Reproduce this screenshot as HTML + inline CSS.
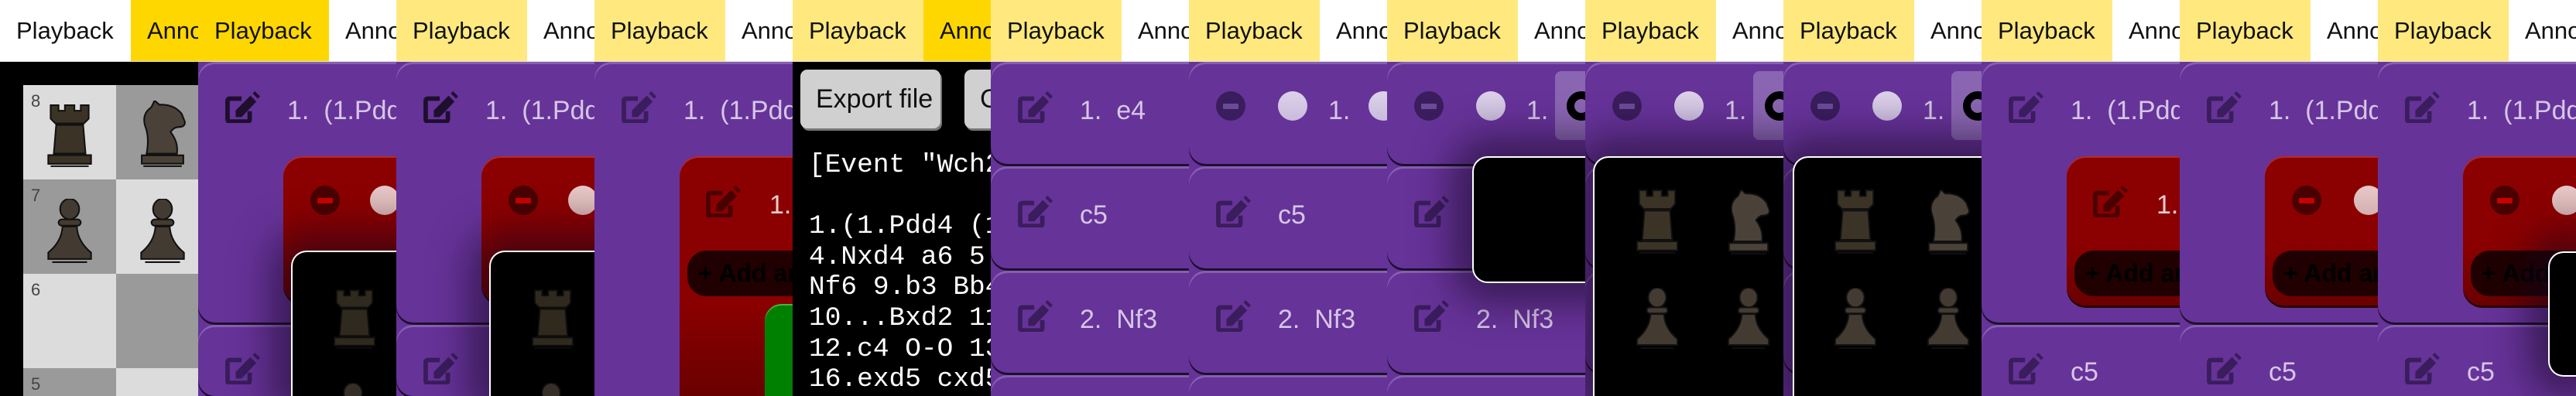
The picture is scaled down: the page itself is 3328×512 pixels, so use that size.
<!DOCTYPE html>
<html style="width:3328px;height:512px;overflow:hidden"><head><meta charset="utf-8"><style>
*{margin:0;padding:0;box-sizing:border-box}
body{width:3328px;height:512px;overflow:hidden;background:#000;font-family:"Liberation Sans",sans-serif;position:relative}
.p{position:absolute;top:0;width:256px;height:512px;overflow:hidden;background:#000}
.hd{position:absolute;left:0;top:0;width:256px;height:80px;background:#fff;border-bottom:1px solid #ddd;white-space:nowrap;z-index:5}
.t{position:absolute;top:0;height:79px;line-height:80px;font-size:31px;color:#111;padding-left:21px}
.t1{left:0;width:169px}.t2{left:169px;width:120px}
.w{background:#fff}.g{background:#ffd700}.l{background:#ffe97f}
.bgp{position:absolute;left:0;top:80px;width:256px;height:432px;background:#663399}
.card{position:absolute;left:0;width:300px;background:#663399;border-radius:22px;box-shadow:inset 0 3px 0 rgba(255,255,255,.22),0 3px 0 #1d0f2e}
.red{position:absolute;left:110px;width:260px;border-radius:25px;background:linear-gradient(#8b0000 0,#8b0000 60%,#6a0000 100%);box-shadow:inset 0 2px 0 rgba(255,120,120,.35),0 3px 0 #2a0000}
.green{position:absolute;left:220px;top:393px;width:200px;height:119px;background:#008000;border-radius:22px 22px 0 0;box-shadow:inset 0 2px 0 rgba(180,255,180,.4)}
.add{position:absolute;left:120px;top:324px;width:200px;height:59px;background:#200000;border-radius:25px;font-weight:bold;font-size:32px;line-height:59px;color:#000;padding-left:14px;white-space:nowrap}
.ico{position:absolute;width:46px;height:42px}
.tx{position:absolute;font-size:34px;color:#d6c6e6;white-space:nowrap;line-height:34px}
.mc{position:absolute;width:38px;height:38px;border-radius:50%;background:#3a1d5c}
.mc::after{content:"";position:absolute;left:9px;top:16px;width:20px;height:7px;background:#6b4a99;border-radius:1px}
.rc{background:#4a0000}.rc::after{background:#c80000}
.lc{position:absolute;width:38px;height:38px;border-radius:50%;background:linear-gradient(#ddd2ea,#c9bbdc)}
.lr{background:linear-gradient(#e8c8c8,#d4b0b0)}
.pop{position:absolute;background:#000;border:2px solid #fff;border-radius:20px;box-shadow:0 0 50px 25px rgba(20,5,30,.55)}
.pc{position:absolute}
.mono{position:absolute;left:21px;top:194px;font-family:"Liberation Mono",monospace;font-size:34.5px;line-height:39.6px;color:#fff;white-space:pre}
.btn{position:absolute;top:90px;height:76px;background:#d0d0d0;border-radius:9px;box-shadow:2px 3px 0 #777;font-size:34px;line-height:76px;color:#111;padding-left:20px;white-space:nowrap}
.sq{position:absolute;width:120px;height:122px}
.num{position:absolute;font-size:22px;color:#444}
</style></head><body>
<svg width="0" height="0" style="position:absolute">
<defs>
<g id="rook"><path d="M6 1H16V8H24V1H36V8H44V1H54V18L48 24H12L6 18Z M13 26H47L50 62H10Z M3 64H57V75H3Z" fill="#3b3426" stroke="#111" stroke-width="2"/><path d="M6 78H54" stroke="#111" stroke-width="2"/></g>
<g id="knight"><path d="M10 64 Q14 44 8 30 Q4 16 16 8 L20 0 L26 5 Q44 4 54 16 L58 26 Q58 32 50 32 Q44 32 40 38 Q50 50 48 64Z M4 66H56V76H4Z" fill="#4a4238" stroke="#111" stroke-width="2"/><path d="M6 79H54" stroke="#111" stroke-width="2"/></g>
<g id="pawn"><ellipse cx="30" cy="13" rx="12" ry="13" fill="#433b32" stroke="#111" stroke-width="2"/><rect x="16" y="26" width="28" height="8" rx="4" fill="#433b32" stroke="#111" stroke-width="2"/><path d="M21 35H39Q40 54 57 68V76H3V68Q20 54 21 35Z" fill="#433b32" stroke="#111" stroke-width="2"/><path d="M8 80H52" stroke="#111" stroke-width="2"/></g>
<g id="edit"><path d="M22 9H6Q3 9 3 12V37Q3 40 6 40H30Q33 40 33 37V26" fill="none" stroke="currentColor" stroke-width="6"/><path d="M14 34V25L34 5L42 13L22 34Z" fill="currentColor"/><path d="M37 2L40 -1L47 6L44 9Z" fill="currentColor"/></g>
</defs></svg>

<div class="p" style="left:0">
<div class="hd"><div class="t t1 w">Playback</div><div class="t t2 g">Annotate</div></div>
<div class="sq" style="left:30px;top:110px;background:#dcdcdc"></div>
<div class="sq" style="left:150px;top:110px;background:#9a9a9a"></div>
<div class="sq" style="left:30px;top:232px;background:#9a9a9a"></div>
<div class="sq" style="left:150px;top:232px;background:#dcdcdc"></div>
<div class="sq" style="left:30px;top:354px;background:#dcdcdc"></div>
<div class="sq" style="left:150px;top:354px;background:#9a9a9a"></div>
<div class="sq" style="left:30px;top:476px;height:36px;background:#9a9a9a"></div>
<div class="sq" style="left:150px;top:476px;height:36px;background:#dcdcdc"></div>
<div class="num" style="left:40px;top:118px">8</div>
<div class="num" style="left:40px;top:240px">7</div>
<div class="num" style="left:40px;top:362px">6</div>
<div class="num" style="left:40px;top:484px">5</div>
<svg class="pc" style="left:59px;top:135px" width="62" height="84" viewBox="0 0 60 82"><use href="#rook"/></svg>
<svg class="pc" style="left:179px;top:130px" width="62" height="88" viewBox="0 0 60 82" preserveAspectRatio="none"><use href="#knight"/></svg>
<svg class="pc" style="left:59px;top:257px" width="62" height="84" viewBox="0 0 60 82"><use href="#pawn"/></svg>
<svg class="pc" style="left:179px;top:257px" width="62" height="84" viewBox="0 0 60 82"><use href="#pawn"/></svg>
</div>

<div class="p" style="left:256px">
<div class="hd"><div class="t t1 g">Playback</div><div class="t t2 w">Annotate</div></div>
<div class="bgp"></div>
<div class="card" style="top:80px;height:337px"></div>
<svg class="ico" style="left:35px;top:117px;color:#1e0f2e" viewBox="0 -2 48 44"><use href="#edit"/></svg>
<div class="tx" style="left:115px;top:126px">1.&nbsp; (1.Pdd4</div>
<div class="red" style="top:202px;height:190px"></div>
<div class="mc rc" style="left:145px;top:240px"></div>
<div class="lc lr" style="left:222px;top:240px"></div>
<div class="card" style="top:420px;height:92px"></div>
<svg class="ico" style="left:35px;top:455px;color:#3a1d5c" viewBox="0 -2 48 44"><use href="#edit"/></svg>
<div class="pop" style="left:120px;top:324px;width:200px;height:188px;border-bottom:0;border-radius:20px 20px 0 0"></div>
<svg class="pc" style="left:173px;top:374px;opacity:.8" width="58" height="80" viewBox="0 0 60 82"><use href="#rook"/></svg>
<svg class="pc" style="left:171px;top:495px;opacity:.8" width="58" height="17" viewBox="0 0 60 17" preserveAspectRatio="xMidYMin slice"><use href="#pawn"/></svg>
</div>

<div class="p" style="left:512px">
<div class="hd"><div class="t t1 l">Playback</div><div class="t t2 w">Annotate</div></div>
<div class="bgp"></div>
<div class="card" style="top:80px;height:337px"></div>
<svg class="ico" style="left:35px;top:117px;color:#1e0f2e" viewBox="0 -2 48 44"><use href="#edit"/></svg>
<div class="tx" style="left:115px;top:126px">1.&nbsp; (1.Pdd4</div>
<div class="red" style="top:202px;height:190px"></div>
<div class="mc rc" style="left:145px;top:240px"></div>
<div class="lc lr" style="left:222px;top:240px"></div>
<div class="card" style="top:420px;height:92px"></div>
<svg class="ico" style="left:35px;top:455px;color:#3a1d5c" viewBox="0 -2 48 44"><use href="#edit"/></svg>
<div class="pop" style="left:120px;top:324px;width:200px;height:188px;border-bottom:0;border-radius:20px 20px 0 0"></div>
<svg class="pc" style="left:173px;top:374px;opacity:.8" width="58" height="80" viewBox="0 0 60 82"><use href="#rook"/></svg>
<svg class="pc" style="left:171px;top:495px;opacity:.8" width="58" height="17" viewBox="0 0 60 17" preserveAspectRatio="xMidYMin slice"><use href="#pawn"/></svg>
</div>

<div class="p" style="left:768px">
<div class="hd"><div class="t t1 l">Playback</div><div class="t t2 w">Annotate</div></div>
<div class="bgp"></div>
<div class="card" style="top:80px;height:432px;border-radius:22px 22px 0 0"></div>
<svg class="ico" style="left:35px;top:117px;color:#3a1d5c" viewBox="0 -2 48 44"><use href="#edit"/></svg>
<div class="tx" style="left:115px;top:126px">1.&nbsp; (1.Pdd4</div>
<div class="red" style="top:202px;height:310px;border-radius:25px 25px 0 0"></div>
<svg class="ico" style="left:144px;top:239px;color:#4a0000" viewBox="0 -2 48 44"><use href="#edit"/></svg>
<div class="tx" style="left:226px;top:248px;color:#e8cccc">1.</div>
<div class="add">+ Add an</div>
<div class="green"></div>
</div>

<div class="p" style="left:1024px">
<div class="hd"><div class="t t1 l">Playback</div><div class="t t2 g">Annotate</div></div>
<div class="btn" style="left:10px;width:181px">Export file</div>
<div class="btn" style="left:222px;width:120px">Copy</div>
<div class="mono">[Event "Wch2

1.(1.Pdd4 (1
4.Nxd4 a6 5.
Nf6 9.b3 Bb4
10...Bxd2 11
12.c4 O-O 13
16.exd5 cxd5</div>
</div>

<div class="p" style="left:1280px">
<div class="hd"><div class="t t1 l">Playback</div><div class="t t2 w">Annotate</div></div>
<div class="bgp"></div>
<div class="card" style="top:80px;height:132px"></div>
<div class="card" style="top:215px;height:132px"></div>
<div class="card" style="top:350px;height:132px"></div>
<div class="card" style="top:485px;height:27px;border-radius:22px 22px 0 0"></div>
<svg class="ico" style="left:35px;top:117px;color:#3a1d5c" viewBox="0 -2 48 44"><use href="#edit"/></svg>
<svg class="ico" style="left:35px;top:252px;color:#3a1d5c" viewBox="0 -2 48 44"><use href="#edit"/></svg>
<svg class="ico" style="left:35px;top:387px;color:#3a1d5c" viewBox="0 -2 48 44"><use href="#edit"/></svg>
<div class="tx" style="left:115px;top:126px">1.&nbsp; e4</div>
<div class="tx" style="left:115px;top:261px">c5</div>
<div class="tx" style="left:115px;top:396px">2.&nbsp; Nf3</div>
</div>

<div class="p" style="left:1536px">
<div class="hd"><div class="t t1 l">Playback</div><div class="t t2 w">Annotate</div></div>
<div class="bgp"></div>
<div class="card" style="top:80px;height:132px"></div>
<div class="card" style="top:215px;height:132px"></div>
<div class="card" style="top:350px;height:132px"></div>
<div class="card" style="top:485px;height:27px;border-radius:22px 22px 0 0"></div>
<div class="mc" style="left:35px;top:118px"></div>
<div class="lc" style="left:115px;top:118px"></div>
<div class="tx" style="left:180px;top:126px">1.</div>
<div class="lc" style="left:232px;top:118px"></div>
<svg class="ico" style="left:35px;top:252px;color:#3a1d5c" viewBox="0 -2 48 44"><use href="#edit"/></svg>
<svg class="ico" style="left:35px;top:387px;color:#3a1d5c" viewBox="0 -2 48 44"><use href="#edit"/></svg>
<div class="tx" style="left:115px;top:261px">c5</div>
<div class="tx" style="left:115px;top:396px">2.&nbsp; Nf3</div>
</div>

<div class="p" style="left:1792px">
<div class="hd"><div class="t t1 l">Playback</div><div class="t t2 w">Annotate</div></div>
<div class="bgp"></div>
<div class="card" style="top:80px;height:132px"></div>
<div class="card" style="top:215px;height:132px"></div>
<div class="card" style="top:350px;height:132px"></div>
<div class="card" style="top:485px;height:27px;border-radius:22px 22px 0 0"></div>
<div class="mc" style="left:35px;top:118px"></div>
<div class="lc" style="left:115px;top:118px"></div>
<div class="tx" style="left:180px;top:126px">1.</div>
<div style="position:absolute;left:217px;top:92px;width:80px;height:89px;background:#8a66b2;border-radius:8px"></div>
<div style="position:absolute;left:232px;top:118px;width:38px;height:38px;border-radius:50%;border:10px solid #000"></div>
<svg class="ico" style="left:35px;top:252px;color:#3a1d5c" viewBox="0 -2 48 44"><use href="#edit"/></svg>
<svg class="ico" style="left:35px;top:387px;color:#3a1d5c" viewBox="0 -2 48 44"><use href="#edit"/></svg>
<div class="tx" style="left:115px;top:396px">2.&nbsp; Nf3</div>
<div class="pop" style="left:110px;top:202px;width:200px;height:164px"></div>
</div>

<div class="p" style="left:2048px">
<div class="hd"><div class="t t1 l">Playback</div><div class="t t2 w">Annotate</div></div>
<div class="bgp"></div>
<div class="card" style="top:80px;height:132px"></div>
<div class="card" style="top:215px;height:132px"></div>
<div class="card" style="top:350px;height:132px"></div>
<div class="mc" style="left:35px;top:118px"></div>
<div class="lc" style="left:115px;top:118px"></div>
<div class="tx" style="left:180px;top:126px">1.</div>
<div style="position:absolute;left:217px;top:92px;width:80px;height:89px;background:#8a66b2;border-radius:8px"></div>
<div style="position:absolute;left:232px;top:118px;width:38px;height:38px;border-radius:50%;border:10px solid #000"></div>
<div class="pop" style="left:10px;top:202px;width:300px;height:310px;border-bottom:0;border-radius:20px 20px 0 0"></div>
<svg class="pc" style="left:64px;top:245px" width="58" height="86" viewBox="0 0 60 82" preserveAspectRatio="none"><use href="#rook"/></svg>
<svg class="pc" style="left:182px;top:245px" width="58" height="86" viewBox="0 0 60 82" preserveAspectRatio="none"><use href="#knight"/></svg>
<svg class="pc" style="left:64px;top:372px" width="58" height="80" viewBox="0 0 60 82" preserveAspectRatio="none"><use href="#pawn"/></svg>
<svg class="pc" style="left:182px;top:372px" width="58" height="80" viewBox="0 0 60 82" preserveAspectRatio="none"><use href="#pawn"/></svg>
</div>

<div class="p" style="left:2304px">
<div class="hd"><div class="t t1 l">Playback</div><div class="t t2 w">Annotate</div></div>
<div class="bgp"></div>
<div class="card" style="top:80px;height:132px"></div>
<div class="card" style="top:215px;height:132px"></div>
<div class="card" style="top:350px;height:132px"></div>
<div class="mc" style="left:35px;top:118px"></div>
<div class="lc" style="left:115px;top:118px"></div>
<div class="tx" style="left:180px;top:126px">1.</div>
<div style="position:absolute;left:217px;top:92px;width:80px;height:89px;background:#8a66b2;border-radius:8px"></div>
<div style="position:absolute;left:232px;top:118px;width:38px;height:38px;border-radius:50%;border:10px solid #000"></div>
<div class="pop" style="left:12px;top:202px;width:300px;height:310px;border-bottom:0;border-radius:20px 20px 0 0"></div>
<svg class="pc" style="left:64px;top:245px" width="58" height="86" viewBox="0 0 60 82" preserveAspectRatio="none"><use href="#rook"/></svg>
<svg class="pc" style="left:184px;top:245px" width="58" height="86" viewBox="0 0 60 82" preserveAspectRatio="none"><use href="#knight"/></svg>
<svg class="pc" style="left:64px;top:372px" width="58" height="80" viewBox="0 0 60 82" preserveAspectRatio="none"><use href="#pawn"/></svg>
<svg class="pc" style="left:184px;top:372px" width="58" height="80" viewBox="0 0 60 82" preserveAspectRatio="none"><use href="#pawn"/></svg>
</div>

<div class="p" style="left:2560px">
<div class="hd"><div class="t t1 l">Playback</div><div class="t t2 w">Annotate</div></div>
<div class="bgp"></div>
<div class="card" style="top:80px;height:337px"></div>
<svg class="ico" style="left:35px;top:117px;color:#3a1d5c" viewBox="0 -2 48 44"><use href="#edit"/></svg>
<div class="tx" style="left:115px;top:126px">1.&nbsp; (1.Pdd4</div>
<div class="red" style="top:202px;height:193px"></div>
<svg class="ico" style="left:144px;top:239px;color:#4a0000" viewBox="0 -2 48 44"><use href="#edit"/></svg>
<div class="tx" style="left:226px;top:248px;color:#e8cccc">1.</div>
<div class="add">+ Add an</div>
<div class="card" style="top:420px;height:92px;border-radius:22px 22px 0 0"></div>
<svg class="ico" style="left:35px;top:455px;color:#3a1d5c" viewBox="0 -2 48 44"><use href="#edit"/></svg>
<div class="tx" style="left:115px;top:464px">c5</div>
</div>

<div class="p" style="left:2816px">
<div class="hd"><div class="t t1 l">Playback</div><div class="t t2 w">Annotate</div></div>
<div class="bgp"></div>
<div class="card" style="top:80px;height:337px"></div>
<svg class="ico" style="left:35px;top:117px;color:#3a1d5c" viewBox="0 -2 48 44"><use href="#edit"/></svg>
<div class="tx" style="left:115px;top:126px">1.&nbsp; (1.Pdd4</div>
<div class="red" style="top:202px;height:193px"></div>
<div class="mc rc" style="left:145px;top:240px"></div>
<div class="lc lr" style="left:225px;top:240px"></div>
<div class="add">+ Add an</div>
<div class="card" style="top:420px;height:92px;border-radius:22px 22px 0 0"></div>
<svg class="ico" style="left:35px;top:455px;color:#3a1d5c" viewBox="0 -2 48 44"><use href="#edit"/></svg>
<div class="tx" style="left:115px;top:464px">c5</div>
</div>

<div class="p" style="left:3072px">
<div class="hd"><div class="t t1 l">Playback</div><div class="t t2 w">Annotate</div></div>
<div class="bgp"></div>
<div class="card" style="top:80px;height:337px"></div>
<svg class="ico" style="left:35px;top:117px;color:#3a1d5c" viewBox="0 -2 48 44"><use href="#edit"/></svg>
<div class="tx" style="left:115px;top:126px">1.&nbsp; (1.Pdd4</div>
<div class="red" style="top:202px;height:193px"></div>
<div class="mc rc" style="left:145px;top:240px"></div>
<div class="lc lr" style="left:225px;top:240px"></div>
<div class="add">+ Add an</div>
<div class="card" style="top:420px;height:92px;border-radius:22px 22px 0 0"></div>
<svg class="ico" style="left:35px;top:455px;color:#3a1d5c" viewBox="0 -2 48 44"><use href="#edit"/></svg>
<div class="tx" style="left:115px;top:464px">c5</div>
<div class="pop" style="left:220px;top:325px;width:36px;height:162px;border-right:0;border-radius:20px 0 0 20px"></div>
</div>
</body></html>
